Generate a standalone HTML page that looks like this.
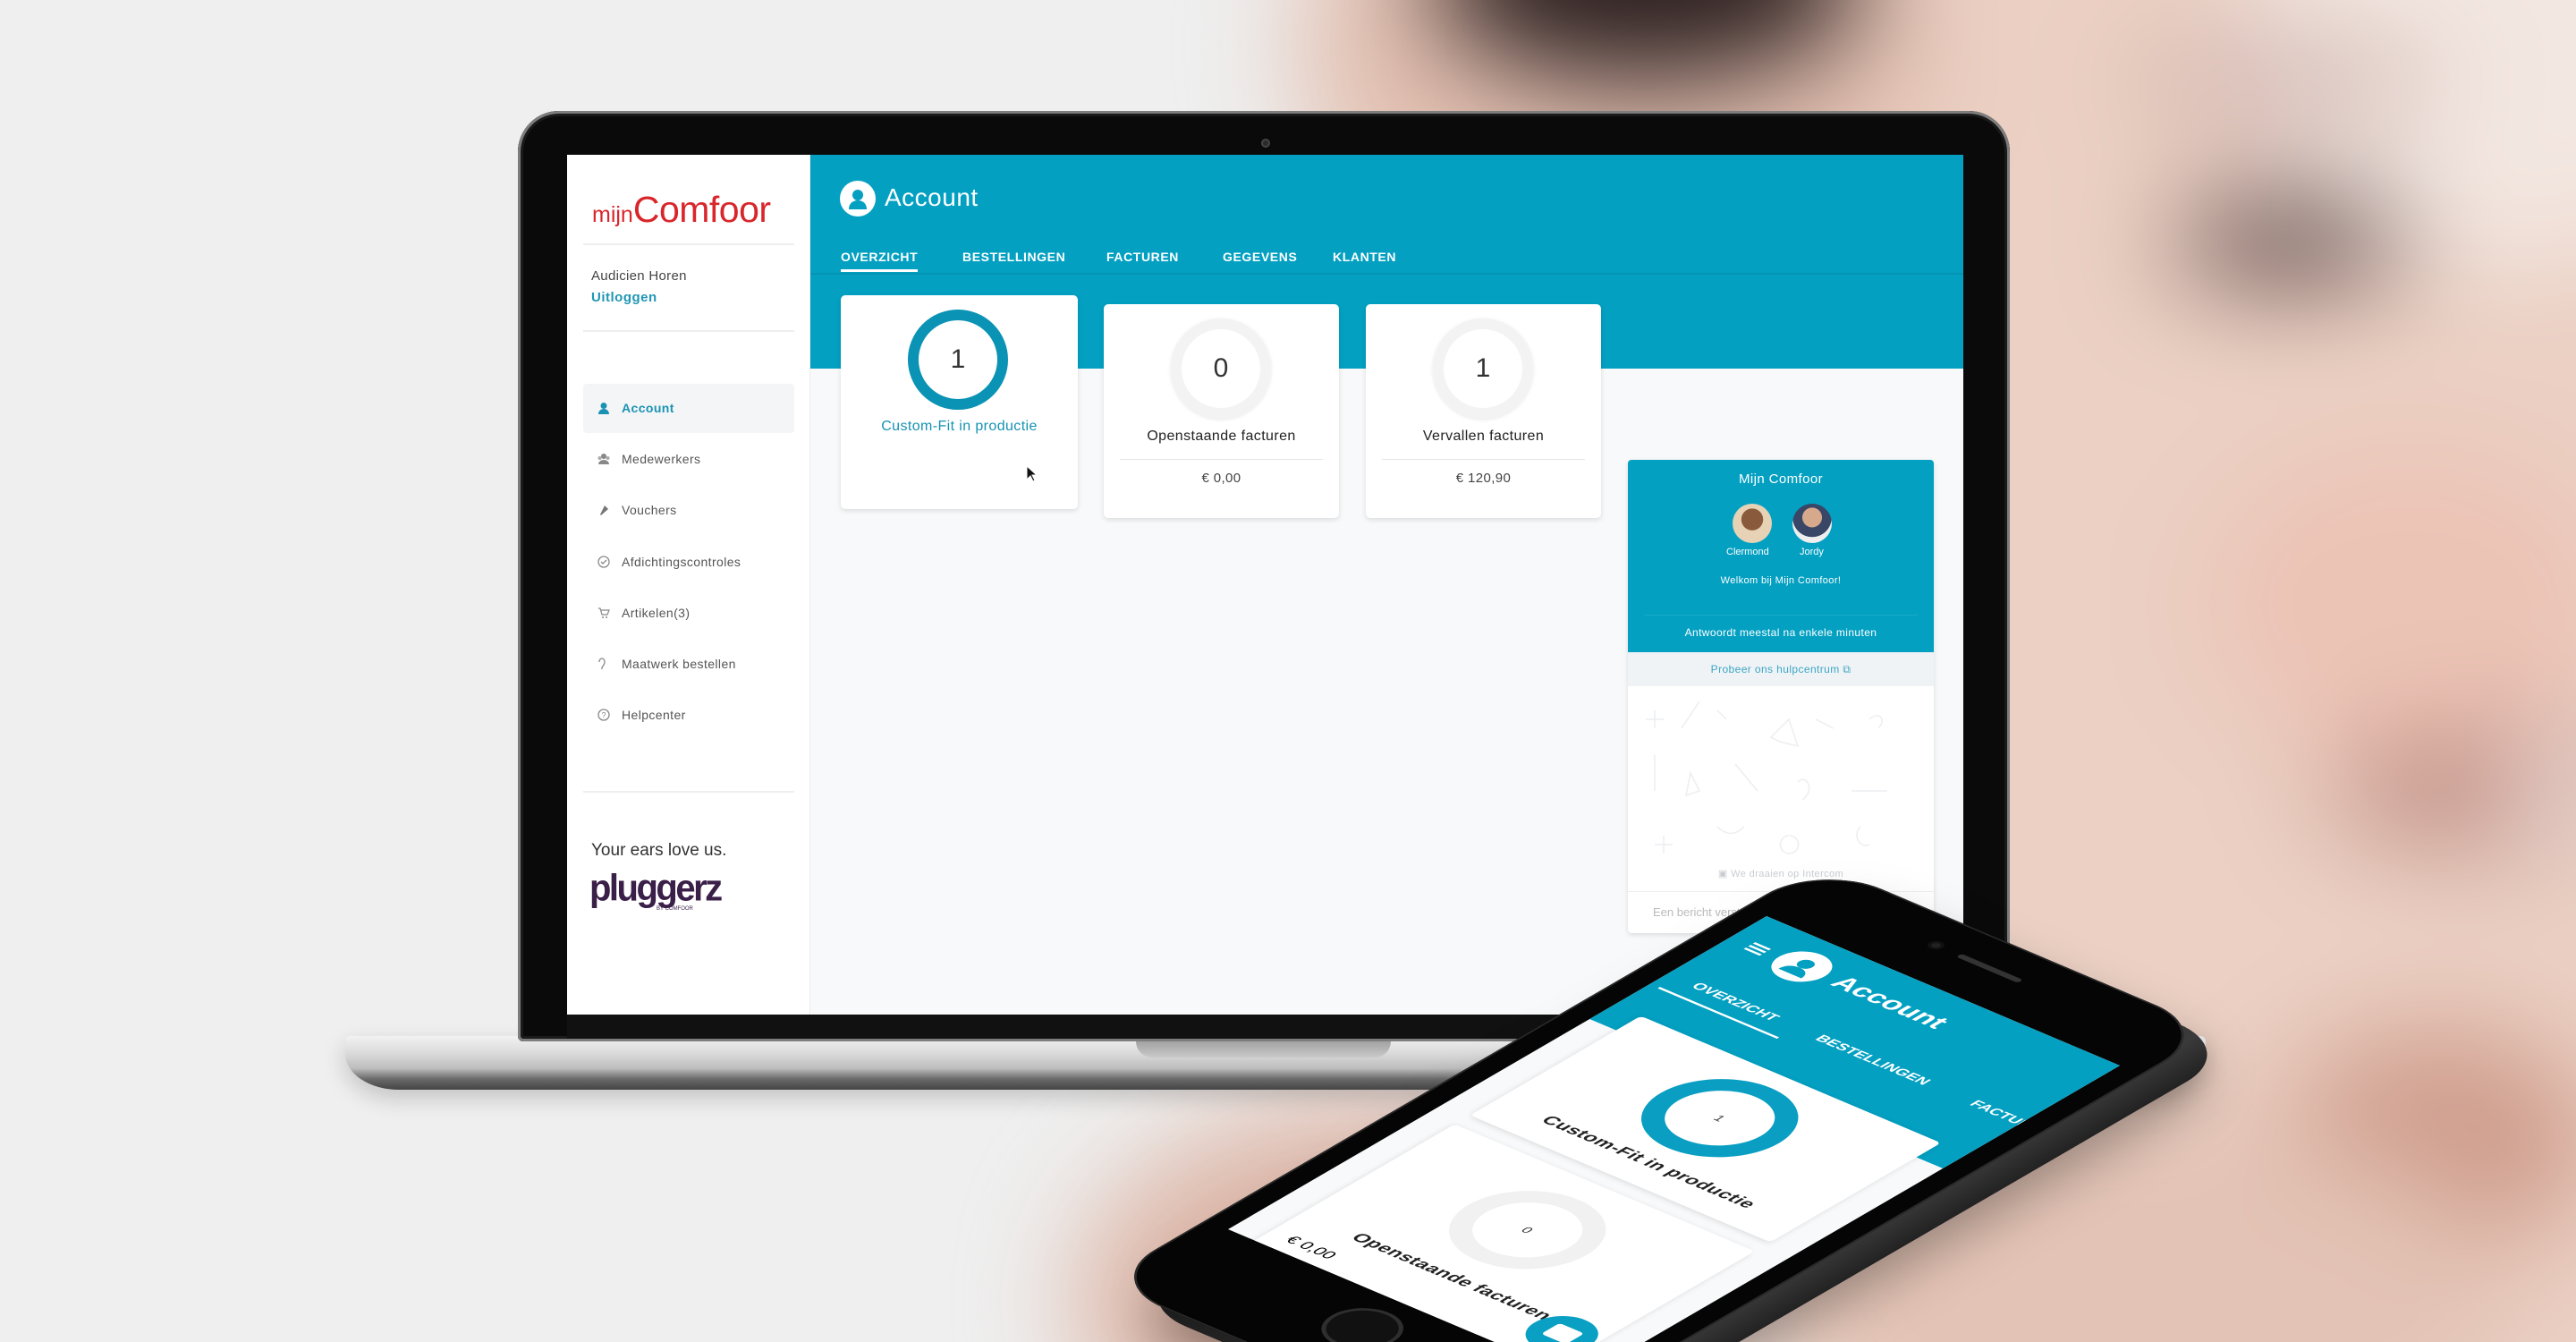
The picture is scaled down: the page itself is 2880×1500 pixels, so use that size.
<!DOCTYPE html>
<html><head><meta charset="utf-8"><style>
*{margin:0;padding:0;box-sizing:border-box}
html,body{width:2880px;height:1500px;overflow:hidden}
body{background:#efefef;font-family:"Liberation Sans",sans-serif}
#root{position:relative;width:2880px;height:1500px;overflow:hidden;background:#efefef}
.abs{position:absolute}
.bg{position:absolute;inset:-100px;filter:blur(60px)}
.bg div{position:absolute;border-radius:50%}
.lid{left:579px;top:124px;width:1668px;height:1040px;background:#0a0a0a;border-radius:46px 46px 6px 6px;box-shadow:inset 0 0 0 3px #7d7d7d,inset 0 0 0 6px #1a1a1a}
.screen{left:634px;top:173px;width:1561px;height:961px;background:#f8f9fa;overflow:hidden}
.side{left:0;top:0;width:272px;height:961px;background:#fff;border-right:1px solid #ececec}
.hr{position:absolute;height:2px;background:#eeeeee;left:18px;width:236px}
.item{position:absolute;left:61px;font-size:14px;color:#555;letter-spacing:.4px;transform:translateY(-50%)}
.ic{position:absolute;left:34px;width:14px;height:14px;transform:translateY(-50%)}
.tab{position:absolute;top:106px;font-size:14px;font-weight:bold;color:#fff;letter-spacing:.6px}
.card{position:absolute;background:#fff;border-radius:5px;box-shadow:0 2px 6px rgba(0,0,0,.12)}
.ring{position:absolute;border-radius:50%;display:flex;align-items:center;justify-content:center;font-size:30px;color:#333;font-weight:300}
.lbl{position:absolute;left:0;right:0;text-align:center;font-size:16px;color:#222;letter-spacing:.4px}
</style></head><body><div id="root">

<div class="bg">
  <div style="left:1850px;top:-300px;width:1600px;height:2300px;background:#ebd0c3"></div>
  <div style="left:1550px;top:-150px;width:700px;height:600px;background:#e2bfb0"></div>
  <div style="left:2600px;top:-100px;width:600px;height:500px;background:#f3e7e1"></div>
  <div style="left:1700px;top:-40px;width:480px;height:230px;background:#2c2020"></div>
  <div style="left:2480px;top:155px;width:350px;height:70px;background:#c8aaa6"></div>
  <div style="left:2530px;top:325px;width:260px;height:90px;background:#5a4545"></div>
  <div style="left:2570px;top:600px;width:450px;height:350px;background:#ecc4b6"></div>
  <div style="left:2700px;top:920px;width:420px;height:130px;background:#c08f85"></div>
  <div style="left:2900px;top:950px;width:160px;height:80px;background:#f2ecec"></div>
  <div style="left:1300px;top:1330px;width:700px;height:450px;background:#dcb5a6"></div>
  <div style="left:2650px;top:1250px;width:350px;height:250px;background:#cf9d8d"></div>
  <div style="left:2100px;top:1350px;width:800px;height:400px;background:#e3c3b5"></div>
</div>

<!-- laptop base -->
<div class="abs" style="left:386px;top:1158px;width:2080px;height:60px;border-radius:6px 6px 60px 60px/6px 6px 40px 40px;background:linear-gradient(#f2f2f2 0%,#d8d8d8 35%,#bdbdbd 60%,#6a6a6a 80%,#444 100%);box-shadow:0 10px 25px rgba(0,0,0,.18)"></div>
<div class="abs" style="left:1270px;top:1160px;width:285px;height:22px;border-radius:0 0 18px 18px;background:linear-gradient(#9a9a9a,#c9c9c9)"></div>
<div class="abs lid"></div>
<div class="abs" style="left:1410px;top:155px;width:10px;height:10px;border-radius:50%;background:#2a2a2a;box-shadow:inset 0 0 0 2px #444"></div>

<div class="abs screen">
  <div class="abs side">
    <div class="abs" style="left:28px;top:38px;color:#d8262b;white-space:nowrap"><span style="font-size:25px">mijn</span><span style="font-size:41px;letter-spacing:-.5px">Comfoor</span></div>
    <div class="hr" style="top:99px"></div>
    <div class="abs" style="left:27px;top:127px;font-size:15px;color:#444;letter-spacing:.3px">Audicien Horen</div>
    <div class="abs" style="left:27px;top:151px;font-size:15px;color:#1f96b5;font-weight:bold;letter-spacing:.5px">Uitloggen</div>
    <div class="hr" style="top:196px"></div>
    <div class="abs" style="left:18px;top:256px;width:236px;height:55px;background:#f4f5f7;border-radius:4px"></div>
    <svg class="ic" style="top:283px" viewBox="0 0 14 14"><circle cx="7" cy="4.5" r="3.5" fill="#1a93b3"/><path d="M1 14c0-4 3-6 6-6s6 2 6 6z" fill="#1a93b3"/></svg>
    <div class="item" style="top:283px;color:#1a93b3;font-weight:bold">Account</div>
    <svg class="ic" style="top:340px" viewBox="0 0 14 14"><circle cx="7" cy="4" r="3" fill="#888"/><circle cx="2.5" cy="6" r="2" fill="#aaa"/><circle cx="11.5" cy="6" r="2" fill="#aaa"/><path d="M1 13c0-3 3-5 6-5s6 2 6 5z" fill="#888"/></svg>
    <div class="item" style="top:340px">Medewerkers</div>
    <svg class="ic" style="top:397px" viewBox="0 0 14 14"><path d="M3 12L8 2l4 4-8 7z" fill="#777"/></svg>
    <div class="item" style="top:397px">Vouchers</div>
    <svg class="ic" style="top:455px" viewBox="0 0 14 14"><circle cx="7" cy="7" r="6" fill="none" stroke="#888" stroke-width="1.3"/><path d="M4 7l2 2 4-4" fill="none" stroke="#888" stroke-width="1.3"/></svg>
    <div class="item" style="top:455px">Afdichtingscontroles</div>
    <svg class="ic" style="top:512px" viewBox="0 0 14 14"><path d="M1 2h2l2 7h6l2-5H4" fill="none" stroke="#888" stroke-width="1.2"/><circle cx="6" cy="12" r="1" fill="#888"/><circle cx="10" cy="12" r="1" fill="#888"/></svg>
    <div class="item" style="top:512px">Artikelen(3)</div>
    <svg class="ic" style="top:569px" viewBox="0 0 14 14"><path d="M5 13c-1-3 3-4 3-8 0-2-1-4-3-4S2 3 2 5" fill="none" stroke="#888" stroke-width="1.3"/></svg>
    <div class="item" style="top:569px">Maatwerk bestellen</div>
    <svg class="ic" style="top:626px" viewBox="0 0 14 14"><circle cx="7" cy="7" r="6" fill="none" stroke="#888" stroke-width="1.3"/><text x="7" y="10.5" font-size="9" text-anchor="middle" fill="#888" font-family="Liberation Sans">?</text></svg>
    <div class="item" style="top:626px">Helpcenter</div>
    <div class="hr" style="top:711px"></div>
    <div class="abs" style="left:27px;top:767px;font-size:19px;color:#333">Your ears love us.</div>
    <div class="abs" style="left:25px;top:798px;font-size:40px;font-weight:bold;color:#3a1f48;letter-spacing:-2.5px;transform:scaleY(1.05)">pluggerz</div>
    <div class="abs" style="left:100px;top:840px;font-size:6px;color:#3a1f48">BY COMFOOR</div>
  </div>

  <div class="abs" style="left:272px;top:0;width:1289px;height:239px;background:#03a0c2"></div>
  <div class="abs" style="left:272px;top:132px;width:1289px;height:2px;background:#0594b4"></div>
  <div class="abs" style="left:305px;top:29px;width:40px;height:40px;border-radius:50%;background:#fff"></div>
  <svg class="abs" style="left:311px;top:35px" width="28" height="28" viewBox="0 0 28 28"><circle cx="14" cy="10" r="6" fill="#03a0c2"/><path d="M4 26c0-7 5-10 10-10s10 3 10 10z" fill="#03a0c2"/></svg>
  <div class="abs" style="left:355px;top:32px;font-size:28px;color:#fff;font-weight:300;letter-spacing:.5px">Account</div>
  <div class="tab" style="left:306px">OVERZICHT</div>
  <div class="tab" style="left:442px">BESTELLINGEN</div>
  <div class="tab" style="left:603px">FACTUREN</div>
  <div class="tab" style="left:733px">GEGEVENS</div>
  <div class="tab" style="left:856px">KLANTEN</div>
  <div class="abs" style="left:306px;top:128px;width:86px;height:3px;background:#fff"></div>

  <div class="card" style="left:306px;top:157px;width:265px;height:239px">
    <div class="ring" style="left:75px;top:16px;width:112px;height:112px;border:12px solid #0a93b4">1</div>
    <div class="lbl" style="top:138px;color:#1592b3">Custom-Fit in productie</div>
    <svg class="abs" style="left:207px;top:190px" width="14" height="20" viewBox="0 0 14 20"><path d="M1 1v15l4-4 3 6 2-1-3-6h5z" fill="#111" stroke="#fff" stroke-width="1"/></svg>
  </div>
  <div class="card" style="left:600px;top:167px;width:263px;height:239px">
    <div class="ring" style="left:75px;top:16px;width:112px;height:112px;border:12px solid #f3f3f3;box-shadow:0 1px 4px rgba(0,0,0,.1)">0</div>
    <div class="lbl" style="top:139px">Openstaande facturen</div>
    <div class="abs" style="left:18px;top:173px;width:227px;height:1px;background:#e6e6e6"></div>
    <div class="lbl" style="top:186px;font-size:15px;color:#444">€ 0,00</div>
  </div>
  <div class="card" style="left:893px;top:167px;width:263px;height:239px">
    <div class="ring" style="left:75px;top:16px;width:112px;height:112px;border:12px solid #f3f3f3;box-shadow:0 1px 4px rgba(0,0,0,.1)">1</div>
    <div class="lbl" style="top:139px">Vervallen facturen</div>
    <div class="abs" style="left:18px;top:173px;width:227px;height:1px;background:#e6e6e6"></div>
    <div class="lbl" style="top:186px;font-size:15px;color:#444">€ 120,90</div>
  </div>

  <div class="card" style="left:1186px;top:341px;width:342px;height:529px;overflow:hidden;border-radius:4px">
    <div class="abs" style="left:0;top:0;width:342px;height:215px;background:#03a0c2"></div>
    <div class="lbl" style="top:13px;color:#fff;font-size:15px">Mijn Comfoor</div>
    <div class="abs" style="left:117px;top:49px;width:44px;height:44px;border-radius:50%;background:radial-gradient(circle at 50% 40%,#8a5a3c 0 35%,#e7d2b5 36%)"></div>
    <div class="abs" style="left:184px;top:49px;width:44px;height:44px;border-radius:50%;background:radial-gradient(circle at 50% 35%,#d6a98c 0 30%,#3a4666 31% 60%,#eee 61%)"></div>
    <div class="abs" style="left:110px;top:97px;font-size:11px;color:#fff">Clermond</div>
    <div class="abs" style="left:192px;top:97px;font-size:11px;color:#fff">Jordy</div>
    <div class="lbl" style="top:129px;color:#fff;font-size:11px">Welkom bij Mijn Comfoor!</div>
    <div class="abs" style="left:18px;top:173px;width:306px;height:1px;background:#1aa9c8"></div>
    <div class="lbl" style="top:186px;color:#fff;font-size:12px">Antwoordt meestal na enkele minuten</div>
    <div class="abs" style="left:0;top:215px;width:342px;height:38px;background:#f0f3f6"></div>
    <div class="lbl" style="top:227px;color:#3aa6c4;font-size:12px">Probeer ons hulpcentrum ⧉</div>
    <svg class="abs" style="left:10px;top:260px" width="320" height="190" viewBox="0 0 320 190" fill="none" stroke="#eceef0" stroke-width="1.5"><path d="M20 20v20M10 30h20M50 40l20-30M90 20l10 10M150 50l20-20 10 30-20-5zM200 30l20 10M260 30c10-10 20 0 10 10M20 110v-40M60 90l10 20-15 5zM110 80l25 30M180 100c10-10 20 10 5 20M240 110h40M20 170h20M30 160v20M90 150c10 10 20 10 30 0M170 160a10 10 0 1 0 1 0M250 150c-10 10 0 25 10 20"/></svg>
    <div class="lbl" style="top:456px;color:#c8cdd2;font-size:11px">▣ We draaien op Intercom</div>
    <div class="abs" style="left:0;top:482px;width:342px;height:1px;background:#eee"></div>
    <div class="abs" style="left:28px;top:498px;font-size:13px;color:#bbb">Een bericht versturen…</div>
  </div>
</div>
<div class="abs" style="left:634px;top:1134px;width:1561px;height:27px;background:#111"></div>

<!-- phone -->
<div class="abs" style="left:1975px;top:1024px;width:0;height:0;transform-origin:0 0;transform:matrix(0.9875,0.4175,-0.86,0.5,0,0)">
  <div class="abs" style="left:12px;top:-86px;width:450px;height:935px;border-radius:70px;background:linear-gradient(90deg,#1a1a1a,#3a3a3a 90%,#222);box-shadow:20px 30px 60px rgba(0,0,0,.35)"></div>
  <div class="abs" style="left:-25px;top:-98px;width:450px;height:935px;border-radius:70px;background:#050505;box-shadow:inset 0 0 0 2px #2a2a2a"></div>
  <div class="abs" style="left:137px;top:-62px;width:14px;height:14px;border-radius:50%;background:#222;box-shadow:inset 0 0 0 3px #111"></div>
  <div class="abs" style="left:170px;top:-58px;width:70px;height:7px;border-radius:4px;background:#333"></div>
  <div class="abs" style="left:165px;top:720px;width:70px;height:70px;border-radius:50%;background:#111;box-shadow:inset 0 0 0 4px #2e2e2e"></div>
  <div class="abs" style="left:0;top:0;width:400px;height:700px;background:#f8f9fa;overflow:hidden">
    <div class="abs" style="left:0;top:0;width:400px;height:230px;background:#03a0c2"></div>
    <div class="abs" style="left:22px;top:40px;width:18px;height:3px;background:#fff;box-shadow:0 6px 0 #fff,0 12px 0 #fff"></div>
    <div class="abs" style="left:54px;top:20px;width:52px;height:52px;border-radius:50%;background:#fff"></div>
    <svg class="abs" style="left:62px;top:28px" width="36" height="36" viewBox="0 0 28 28"><circle cx="14" cy="10" r="6" fill="#03a0c2"/><path d="M4 26c0-7 5-10 10-10s10 3 10 10z" fill="#03a0c2"/></svg>
    <div class="abs" style="left:118px;top:28px;font-size:30px;font-weight:bold;color:#fff">Account</div>
    <div class="abs" style="left:30px;top:120px;font-size:16px;font-weight:bold;color:#fff">OVERZICHT</div>
    <div class="abs" style="left:10px;top:150px;width:135px;height:3px;background:#fff"></div>
    <div class="abs" style="left:170px;top:120px;font-size:16px;font-weight:bold;color:#fff">BESTELLINGEN</div>
    <div class="abs" style="left:345px;top:120px;font-size:16px;font-weight:bold;color:#fff">FACTUREN</div>
    <div class="card" style="left:30px;top:198px;width:340px;height:222px">
      <div class="ring" style="left:100px;top:22px;width:134px;height:134px;border:20px solid #0a9fc2;font-size:14px">1</div>
      <div class="lbl" style="top:174px;font-size:20px;font-weight:bold">Custom-Fit in productie</div>
    </div>
    <div class="card" style="left:30px;top:440px;width:340px;height:280px">
      <div class="ring" style="left:100px;top:30px;width:134px;height:134px;border:20px solid #f1f1f1;font-size:14px">0</div>
      <div class="lbl" style="top:188px;font-size:20px;font-weight:bold">Openstaande facturen</div>
      <div class="abs" style="left:20px;top:228px;font-size:18px">€ 0,00</div>
    </div>
    <div class="abs" style="left:306px;top:622px;width:62px;height:62px;border-radius:50%;background:#09a0c3"></div>
    <div class="abs" style="left:323px;top:640px;width:28px;height:24px;border-radius:4px;background:#fff"></div>
  </div>
</div>
</div></body></html>
